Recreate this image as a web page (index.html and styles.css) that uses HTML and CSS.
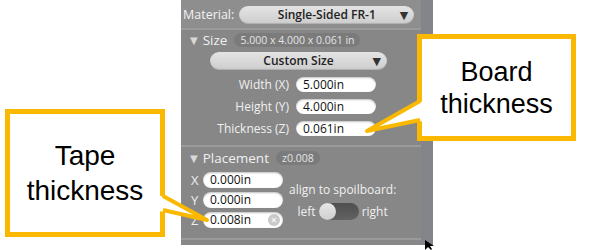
FILE: index.html
```html
<!DOCTYPE html>
<html lang="en">
<head>
    <meta charset="UTF-8">
    <title>Board settings</title>
    <link rel="stylesheet" href="styles.css">
</head>
<body>
    <div class="page">
        <div class="panel">
            <div class="panel-main">
                <div class="material-row">
                    <span class="material-label">Material:</span>
                    <div class="select select-material">Single-Sided FR-1<span class="caret">&#9660;</span></div>
                </div>

                <div class="section section-size">
                    <div class="section-head">
                        <span class="tri">&#9660;</span>
                        <span class="section-title">Size</span>
                        <span class="badge">5.000 x 4.000 x 0.061 in</span>
                    </div>
                    <div class="select select-size">Custom Size<span class="caret">&#9660;</span></div>
                    <div class="dim-row">
                        <label class="dim-label">Width (X)</label>
                        <div class="field">5.000in</div>
                    </div>
                    <div class="dim-row">
                        <label class="dim-label">Height (Y)</label>
                        <div class="field">4.000in</div>
                    </div>
                    <div class="dim-row">
                        <label class="dim-label">Thickness (Z)</label>
                        <div class="field">0.061in</div>
                    </div>
                </div>

                <div class="section section-place">
                    <div class="section-head">
                        <span class="tri">&#9660;</span>
                        <span class="section-title">Placement</span>
                        <span class="badge">z0.008</span>
                    </div>
                    <div class="place-body">
                        <div class="place-fields">
                            <div class="axis-row">
                                <span class="axis">X</span>
                                <div class="field">0.000in</div>
                            </div>
                            <div class="axis-row">
                                <span class="axis">Y</span>
                                <div class="field">0.000in</div>
                            </div>
                            <div class="axis-row">
                                <span class="axis">Z</span>
                                <div class="field field-clear">0.008in<span class="clear">&times;</span></div>
                            </div>
                        </div>
                        <div class="align">
                            <div class="align-title">align to spoilboard:</div>
                            <div class="toggle-row">
                                <span>left</span>
                                <span class="toggle"><span class="knob"></span></span>
                                <span>right</span>
                            </div>
                        </div>
                    </div>
                </div>
            </div>
            <div class="scroll-strip"></div>
        </div>

        <div class="callout callout-board">Board<br>thickness</div>
        <div class="callout callout-tape">Tape<br>thickness</div>

        <svg class="tails" width="595" height="250" viewBox="0 0 595 250">
            <polygon points="423,101 367,130 423,121" fill="#fff"/>
            <polyline points="420,101 367,131 420,120" fill="none" stroke="#fbb800" stroke-width="4" stroke-linejoin="round"/>
            <polygon points="159,195 207,220 159,211" fill="#fff"/>
            <polyline points="163,196 207,220 163,210" fill="none" stroke="#fbb800" stroke-width="4" stroke-linejoin="round"/>
            <path d="M425 240 L425 250 L428 247 L431 250 L432 249 L430 246 L434 246 Z" fill="#000"/>
        </svg>
    </div>
</body>
</html>
```

FILE: styles.css
```css
body {
    margin: 0;
    background: #fff;
    font-family: "Open Sans", "DejaVu Sans", sans-serif;
}
.page {
    position: relative;
    width: 595px;
    height: 250px;
    overflow: hidden;
}
.panel {
    display: flex;
    margin-left: 181px;
    width: 252px;
    height: 245px;
    background: #878787;
}
.panel-main {
    width: 240px;
}
.scroll-strip {
    width: 12px;
    background: #83858a;
}
.material-row {
    display: flex;
    align-items: center;
    gap: 4px;
    height: 30px;
    padding: 1px 0 0 2px;
    box-sizing: border-box;
    background: #8e8e8e;
    border-bottom: 2px solid #9a9a9a;
}
.material-label {
    color: #f2f2f2;
    font-size: 12.5px;
}
.select {
    position: relative;
    height: 18px;
    line-height: 18px;
    border-radius: 9px;
    background: linear-gradient(#e4e4e4, #cdcdcd);
    color: #222;
    font-size: 12px;
    font-weight: 600;
    text-align: center;
    box-shadow: inset 0 -1px 1px rgba(0, 0, 0, 0.15);
}
.caret {
    position: absolute;
    right: 6px;
    top: 0;
    font-size: 11px;
    color: #333;
}
.select-material {
    width: 175px;
    margin-left: 1px;
}
.section-size {
    padding: 2px 0 6px;
    border-bottom: 2px solid #9a9a9a;
}
.section-head {
    display: flex;
    align-items: center;
    height: 16px;
    padding-left: 9px;
    color: #f0f0f0;
}
.tri {
    font-size: 10px;
    color: #d8d8d8;
    margin-right: 5px;
}
.section-title {
    font-size: 13.5px;
    margin-right: 7px;
}
.badge {
    height: 14px;
    line-height: 14px;
    padding: 0 6px;
    border-radius: 7px;
    background: #7b7b7b;
    color: #e4e4e4;
    font-size: 10.5px;
}
.select-size {
    width: 177px;
    margin: 4px 0 3px 29px;
}
.dim-row {
    display: flex;
    align-items: center;
    height: 22px;
}
.dim-label {
    width: 108px;
    text-align: right;
    margin-right: 7px;
    color: #f0f0f0;
    font-size: 12px;
}
.field {
    position: relative;
    width: 80px;
    height: 15px;
    line-height: 15px;
    box-sizing: border-box;
    padding-left: 7px;
    border-radius: 8px;
    background: #fff;
    color: #111;
    font-size: 12px;
    box-shadow: inset 0 1px 2px rgba(0, 0, 0, 0.25);
}
.section-place {
    padding: 3px 0 8px;
    border-bottom: 2px solid #9a9a9a;
}
.place-body {
    display: flex;
    margin-top: 4px;
}
.place-fields {
    display: flex;
    flex-direction: column;
}
.axis-row {
    display: flex;
    align-items: center;
    height: 20px;
    padding-left: 10px;
}
.axis {
    width: 12px;
    color: #eee;
    font-size: 13px;
}
.axis-row .field {
    height: 16px;
    line-height: 16px;
}
.clear {
    position: absolute;
    right: 3px;
    top: 2px;
    width: 12px;
    height: 12px;
    line-height: 11px;
    border-radius: 50%;
    background: #c9c9c9;
    color: #fff;
    font-size: 11px;
    text-align: center;
}
.align {
    display: flex;
    flex-direction: column;
    align-items: center;
    margin: 12px 0 0 6px;
    color: #f0f0f0;
    font-size: 12px;
}
.align-title {
    line-height: 16px;
}
.toggle-row {
    display: flex;
    align-items: center;
    gap: 3px;
    margin-top: 4px;
    height: 18px;
}
.toggle {
    position: relative;
    width: 40px;
    height: 17px;
    border-radius: 9px;
    background: linear-gradient(#4f4f4f, #626262);
}
.knob {
    position: absolute;
    left: 0;
    top: 0;
    width: 17px;
    height: 17px;
    border-radius: 50%;
    background: linear-gradient(#e6e6e6, #cfcfcf);
}
.callout {
    position: absolute;
    display: flex;
    align-items: center;
    justify-content: center;
    box-sizing: border-box;
    border: 5px solid #fbb800;
    background: #fff;
    color: #000;
    font-family: "Liberation Sans", Arial, sans-serif;
    text-align: center;
}
.callout-board {
    left: 417px;
    top: 34px;
    width: 159px;
    height: 107px;
    font-size: 27px;
    line-height: 32px;
}
.callout-tape {
    left: 5px;
    top: 109px;
    width: 160px;
    height: 128px;
    font-size: 28px;
    line-height: 35px;
}
.tails {
    position: absolute;
    left: 0;
    top: 0;
    pointer-events: none;
}
```
